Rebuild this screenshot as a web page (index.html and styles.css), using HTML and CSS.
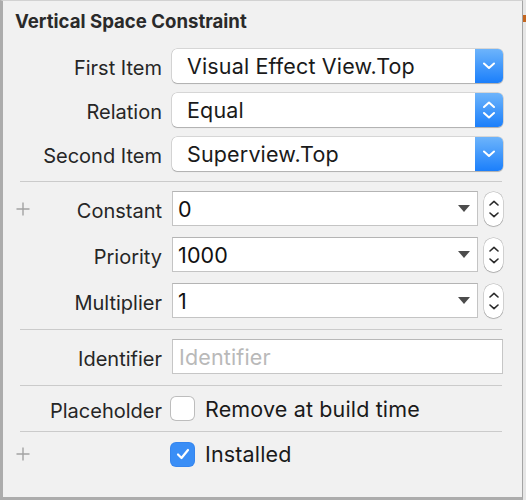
FILE: index.html
```html
<!DOCTYPE html>
<html>
<head>
<meta charset="utf-8">
<link rel="stylesheet" href="styles.css">
</head>
<body>
<div class="window">
  <div class="panel">
    <h1 class="title">Vertical Space Constraint</h1>

    <div class="group g-popups">
      <div class="row r34">
        <div class="lbl"><span class="lbl-text">First Item</span></div>
        <div class="popup">
          <span class="val">Visual Effect View.Top</span>
          <span class="pbtn"><svg width="12" height="8" viewBox="0 0 12 8"><polyline points="1,1.5 6,6 11,1.5" fill="none" stroke="#fff" stroke-width="2" stroke-linecap="round" stroke-linejoin="round"/></svg></span>
        </div>
      </div>
      <div class="row r34">
        <div class="lbl"><span class="lbl-text">Relation</span></div>
        <div class="popup">
          <span class="val">Equal</span>
          <span class="pbtn pbtn-ud"><svg width="12" height="20" viewBox="0 0 12 20"><polyline points="1,7 6,2.5 11,7" fill="none" stroke="#fff" stroke-width="2" stroke-linecap="round" stroke-linejoin="round"/><polyline points="1,13 6,17.5 11,13" fill="none" stroke="#fff" stroke-width="2" stroke-linecap="round" stroke-linejoin="round"/></svg></span>
        </div>
      </div>
      <div class="row r34">
        <div class="lbl"><span class="lbl-text">Second Item</span></div>
        <div class="popup">
          <span class="val">Superview.Top</span>
          <span class="pbtn"><svg width="12" height="8" viewBox="0 0 12 8"><polyline points="1,1.5 6,6 11,1.5" fill="none" stroke="#fff" stroke-width="2" stroke-linecap="round" stroke-linejoin="round"/></svg></span>
        </div>
      </div>
    </div>

    <div class="sep s1"></div>

    <div class="group g-nums">
      <div class="row r35">
        <div class="lbl"><span class="plus"><svg width="14" height="14" viewBox="0 0 14 14"><path d="M7 0.5V13.5M0.5 7H13.5" stroke="#a3a3a3" stroke-width="1.4"/></svg></span><span class="lbl-text">Constant</span></div>
        <div class="ctl">
          <div class="combo"><span class="val">0</span><span class="tri"></span></div>
          <div class="stepper"><svg width="10" height="6" viewBox="0 0 10 6"><polyline points="1,5 5,1.3 9,5" fill="none" stroke="#2b2b2b" stroke-width="1.6" stroke-linecap="round" stroke-linejoin="round"/></svg><svg width="10" height="6" viewBox="0 0 10 6"><polyline points="1,1 5,4.7 9,1" fill="none" stroke="#2b2b2b" stroke-width="1.6" stroke-linecap="round" stroke-linejoin="round"/></svg></div>
        </div>
      </div>
      <div class="row r35">
        <div class="lbl"><span class="lbl-text">Priority</span></div>
        <div class="ctl">
          <div class="combo"><span class="val">1000</span><span class="tri"></span></div>
          <div class="stepper"><svg width="10" height="6" viewBox="0 0 10 6"><polyline points="1,5 5,1.3 9,5" fill="none" stroke="#2b2b2b" stroke-width="1.6" stroke-linecap="round" stroke-linejoin="round"/></svg><svg width="10" height="6" viewBox="0 0 10 6"><polyline points="1,1 5,4.7 9,1" fill="none" stroke="#2b2b2b" stroke-width="1.6" stroke-linecap="round" stroke-linejoin="round"/></svg></div>
        </div>
      </div>
      <div class="row r35">
        <div class="lbl"><span class="lbl-text">Multiplier</span></div>
        <div class="ctl">
          <div class="combo"><span class="val">1</span><span class="tri"></span></div>
          <div class="stepper"><svg width="10" height="6" viewBox="0 0 10 6"><polyline points="1,5 5,1.3 9,5" fill="none" stroke="#2b2b2b" stroke-width="1.6" stroke-linecap="round" stroke-linejoin="round"/></svg><svg width="10" height="6" viewBox="0 0 10 6"><polyline points="1,1 5,4.7 9,1" fill="none" stroke="#2b2b2b" stroke-width="1.6" stroke-linecap="round" stroke-linejoin="round"/></svg></div>
        </div>
      </div>
    </div>

    <div class="sep s2"></div>

    <div class="row r35">
      <div class="lbl"><span class="lbl-text">Identifier</span></div>
      <div class="field"><span class="ph">Identifier</span></div>
    </div>

    <div class="sep s3"></div>

    <div class="row r45">
      <div class="lbl"><span class="lbl-text">Placeholder</span></div>
      <div class="check-line"><span class="cb"></span><span class="cb-text">Remove at build time</span></div>
    </div>

    <div class="sep s4"></div>

    <div class="row r44">
      <div class="lbl"><span class="plus"><svg width="14" height="14" viewBox="0 0 14 14"><path d="M7 0.5V13.5M0.5 7H13.5" stroke="#a3a3a3" stroke-width="1.4"/></svg></span><span class="lbl-text"></span></div>
      <div class="check-line"><span class="cb cb-on"><svg width="14" height="12" viewBox="0 0 14 12"><polyline points="2,6.5 5.5,10 12,2" fill="none" stroke="#fff" stroke-width="2.2" stroke-linecap="round" stroke-linejoin="round"/></svg></span><span class="cb-text">Installed</span></div>
    </div>
  </div>
  <div class="edge"><span class="mark"></span></div>
</div>
</body>
</html>
```
FILE: styles.css
```css
* { box-sizing: border-box; }
html, body { margin: 0; padding: 0; }
body {
  width: 526px;
  height: 500px;
  background: #f2f2f2;
  font-family: Inter, "Liberation Sans", Arial, sans-serif;
  overflow: hidden;
}
.window {
  display: flex;
  width: 526px;
  height: 500px;
}
.panel {
  width: 523px;
  height: 500px;
  background: #f1f1f1;
  border-left: 3px solid #acacac;
  border-bottom: 3px solid #acacac;
  border-right: 1px solid #a4a4a4;
  border-top: 1px solid #d2d2d2;
}
.edge {
  width: 3px;
  height: 500px;
  background: #e6e6e6;
  padding-top: 15px;
}
.mark {
  display: block;
  width: 3px;
  height: 7px;
  background: #c4661f;
}
.title {
  margin: 0 0 16px 0;
  padding: 8px 0 0 12px;
  font-size: 18.6px;
  line-height: 24px;
  font-weight: 700;
  color: #2a2a2a;
}
.group {
  display: flex;
  flex-direction: column;
}
.g-popups { gap: 10px; }
.g-nums { gap: 11px; }
.row {
  display: grid;
  grid-template-columns: 159px 331px;
  column-gap: 10px;
  align-items: center;
}
.r34 { height: 34px; }
.r35 { height: 35px; }
.r45 { height: 45px; }
.r44 { height: 44px; }
.lbl {
  display: flex;
  align-items: center;
  justify-content: space-between;
  height: 100%;
}
.lbl-text {
  margin-left: auto;
  font-size: 20px;
  color: #262626;
  padding-top: 4px;
}
.plus {
  display: flex;
  margin-left: 13px;
}
.popup {
  display: flex;
  height: 34px;
  background: #fff;
  border-radius: 5px;
  box-shadow: 0 0 0 0.5px rgba(0,0,0,0.22), 0 1px 1px rgba(0,0,0,0.18);
  overflow: hidden;
}
.val {
  flex: 1;
  display: flex;
  align-items: center;
  font-size: 21.5px;
  letter-spacing: 0.15px;
  color: #1a1a1a;
  padding-left: 15px;
}
.pbtn {
  width: 28px;
  display: flex;
  align-items: center;
  justify-content: center;
  background: linear-gradient(#6db4fb, #1b7ffb);
}
.ctl {
  display: flex;
  align-items: center;
  gap: 6px;
}
.combo {
  flex: 1;
  height: 35px;
  display: flex;
  align-items: center;
  background: #fff;
  border: 1px solid #c4c4c4;
  border-top-color: #b4b4b4;
}
.combo .val {
  padding-left: 5px;
  color: #111;
}
.tri {
  width: 0;
  height: 0;
  border-left: 6px solid transparent;
  border-right: 6px solid transparent;
  border-top: 7px solid #4c4c4c;
  margin-right: 7px;
}
.stepper {
  width: 19px;
  height: 34px;
  border-radius: 9px;
  background: #fff;
  box-shadow: 0 0 0 0.5px rgba(0,0,0,0.25), 0 1px 1px rgba(0,0,0,0.15);
  display: flex;
  flex-direction: column;
  align-items: center;
  justify-content: center;
  gap: 6px;
}
.field {
  height: 35px;
  display: flex;
  align-items: center;
  background: #fff;
  border: 1px solid #c6c6c6;
  border-top-color: #b8b8b8;
}
.ph {
  font-size: 21.5px;
  letter-spacing: 0.15px;
  color: #b9b9b9;
  padding-left: 6px;
}
.sep {
  height: 1px;
  background: #cbcbcb;
  margin-left: 17px;
  margin-right: 20px;
}
.s1 { margin-top: 10px; margin-bottom: 9px; }
.s2 { margin-top: 11px; margin-bottom: 9px; }
.s3 { margin-top: 11px; }
.s4 { margin-top: 0; }
.check-line {
  display: flex;
  align-items: center;
  margin-left: -1px;
}
.cb {
  width: 23px;
  height: 23px;
  border-radius: 5px;
  background: #fff;
  box-shadow: 0 0 0 1px #bdbdbd;
  display: flex;
  align-items: center;
  justify-content: center;
}
.cb-on {
  background: #3a8ef6;
  box-shadow: 0 0 0 1px #3585ee;
}
.cb-text {
  font-size: 21.5px;
  letter-spacing: 0.15px;
  color: #1a1a1a;
  margin-left: 11px;
}
```
